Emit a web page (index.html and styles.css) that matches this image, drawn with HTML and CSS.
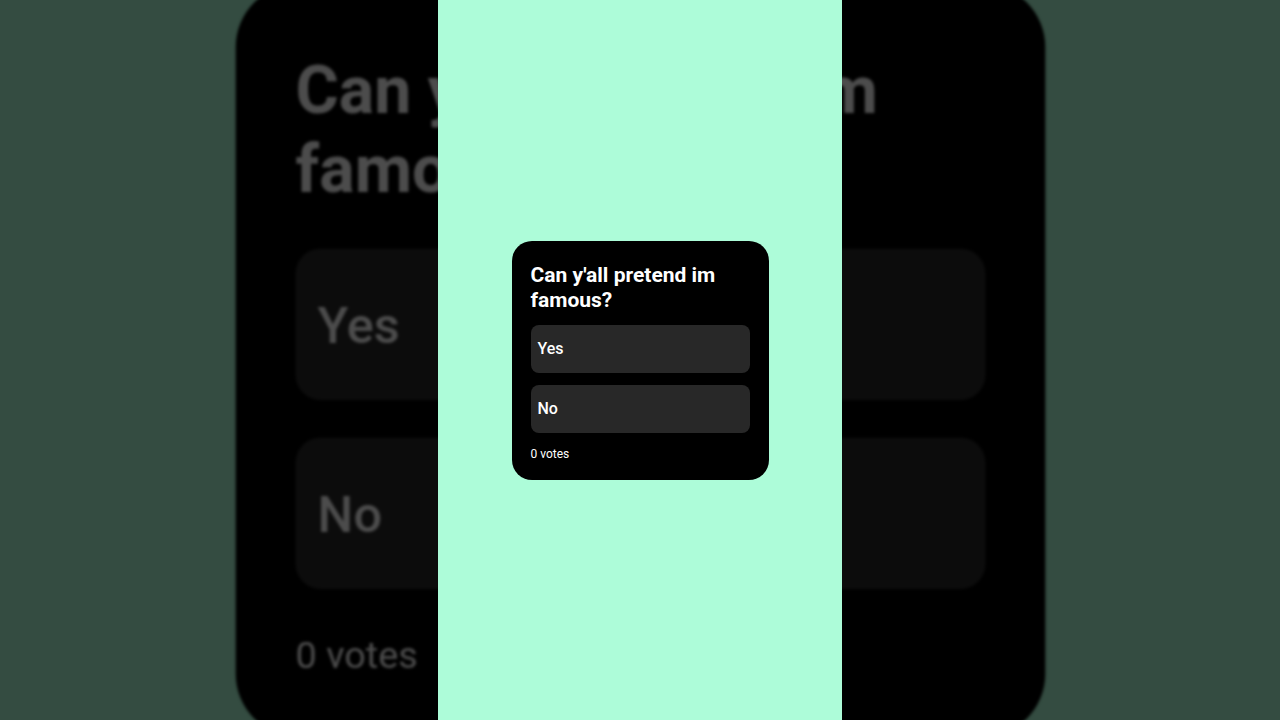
FILE: index.html
```html
<!DOCTYPE html>
<html lang="en">
<head>
    <meta charset="UTF-8">
    <meta name="viewport" content="width=device-width, initial-scale=1.0">
    <title>Poll</title>
    <link rel="stylesheet" href="styles.css">
</head>
<body>

<div class="stage">
    <!-- blurred, enlarged copy behind the strip -->
    <div class="card ghost" aria-hidden="true">
        <h2 class="question">Can y'all pretend im famous?</h2>
        <div class="option">Yes</div>
        <div class="option">No</div>
        <div class="votes">0 votes</div>
    </div>

    <div class="strip">
        <div class="card">
            <h2 class="question">Can y'all pretend im famous?</h2>
            <div class="option">Yes</div>
            <div class="option">No</div>
            <div class="votes">0 votes</div>
        </div>
    </div>
</div>

</body>
</html>
```

FILE: styles.css
```css
body {
    margin: 0;
    font-family: Roboto, "Liberation Sans", Arial, sans-serif;
    background-color: #344c41;
    overflow: hidden;
}

.stage {
    display: grid;
    width: 1280px;
    height: 720px;
    overflow: hidden;
}

.stage > * {
    grid-area: 1 / 1;
}

.strip {
    position: relative;
    z-index: 1;
    justify-self: center;
    width: 404px;
    height: 720px;
    background-color: #adfcd9;
    display: flex;
    align-items: center;
    justify-content: center;
}

.card {
    width: 257px;
    box-sizing: border-box;
    padding: 22px 19px 19px 19px;
    background-color: #000;
    border-radius: 20px;
    color: #fff;
}

.ghost {
    justify-self: center;
    align-self: center;
    transform: scale(3.15);
    filter: brightness(0.3) blur(0.5px);
}

.question {
    margin: 0 0 12px 0;
    font-size: 21px;
    line-height: 25px;
    font-weight: 700;
}

.option {
    height: 48px;
    display: flex;
    align-items: center;
    padding-left: 7px;
    margin-bottom: 12px;
    background-color: #282828;
    border-radius: 8px;
    font-size: 16px;
    font-weight: 500;
}

.option:last-of-type {
    margin-bottom: 0;
}

.votes {
    margin-top: 14px;
    font-size: 12px;
    line-height: 14px;
}
```
